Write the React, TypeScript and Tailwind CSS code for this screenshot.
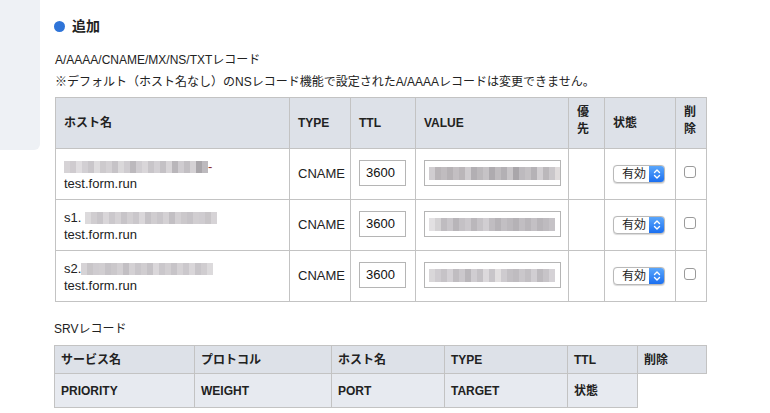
import React from "react";

const FONT = '"Liberation Sans", "Noto Sans CJK JP", sans-serif';

const Mosaic = ({ shades, w = 6, h = 12, className = "" }: { shades: string[]; w?: number; h?: number; className?: string }) => (
  <span className={"inline-flex align-middle blur-[0.6px] " + className}>
    {shades.map((c, i) => (
      <span key={i} style={{ width: w, height: h, background: c, display: "inline-block" }} />
    ))}
  </span>
);

const s1 = ["#d6d3d6", "#cfcbcf", "#e0dde0", "#d2cfd3", "#c9c6ca", "#dedcde", "#cdcacd", "#d4d1d4", "#c6c3c7", "#dad8da", "#cfccd0", "#bcb9bd", "#d0cdd1", "#d9d6d9", "#c8c5c9", "#d3d0d4", "#c4c1c5", "#d8d5d8", "#b9b6ba", "#cfccd0", "#c2bfc3", "#d4d1d4", "#a9a6aa", "#bdbabe"];
const s2 = ["#dcdadc", "#d0cdd0", "#c8c5c9", "#d9d6d9", "#cbc8cc", "#d5d2d5", "#c7c4c8", "#d2cfd2", "#cac7cb", "#dad7da", "#c5c2c6", "#d0cdd0", "#c9c6ca", "#d4d1d4", "#c2bfc3", "#d3d0d3", "#cbc8cb", "#c6c3c7", "#d1ced1", "#cfccd0", "#c8c5c8", "#d6d3d6"];
const v1 = ["#d0cdd0", "#b9b5b8", "#c0bcbf", "#b6b2b5", "#c3bfc2", "#bab6b9", "#cfcccf", "#b2afb3", "#bcb9bc", "#c6c3c6", "#aeabaf", "#bfbcbf", "#b3b0b4", "#c8c5c8", "#a9a6aa", "#bdbabe", "#c4c1c4", "#b5b2b6", "#d2cfd2", "#bbb8bb", "#cac7ca", "#e0dcdc"];
const v2 = ["#e2e0e2", "#d4d2d4", "#bfbcc0", "#c9c6ca", "#b8b5b9", "#c4c1c5", "#cbc8cc", "#bab7bb", "#c6c3c7", "#d1ced2", "#c0bdc1", "#b6b3b7", "#c2bfc3", "#bcb9bd", "#b5b2b6", "#c1bec2", "#b9b6ba", "#c3c0c4", "#b8b5b9", "#bebbbf", "#c5c2c6"];
const v3 = ["#d9d7d9", "#cfccd0", "#c6c3c7", "#d4d1d5", "#c0bdc1", "#cbc8cc", "#b9b6ba", "#d0cdd1", "#c4c1c5", "#dcd9dc", "#c8c5c9", "#e2dfe0", "#cecbcf", "#c3c0c4", "#bfbcc0", "#cac7cb", "#c2bfc3", "#d1ced2", "#bdbabe", "#c7c4c8", "#d5d2d6"];

const SelectBox = () => (
  <div className="flex h-[18px] w-[52px] rounded-[4px] border border-[#b9b9b9] bg-white overflow-hidden shadow-[0_0.5px_1px_rgba(0,0,0,0.15)]">
    <div className="flex-1 flex items-center pl-[8px] text-[12px] text-[#222] leading-none">有効</div>
    <div className="w-[15px] bg-gradient-to-b from-[#5aa6fb] to-[#1b6ff0] flex items-center justify-center">
      <svg width="8" height="12" viewBox="0 0 8 12" fill="none" stroke="white" strokeWidth="1.4" strokeLinecap="round" strokeLinejoin="round">
        <path d="M1.5 4.5 L4 2 L6.5 4.5" />
        <path d="M1.5 7.5 L4 10 L6.5 7.5" />
      </svg>
    </div>
  </div>
);

const CheckBox = () => <div className="w-[12px] h-[12px] rounded-[3px] border border-[#9a9a9a] bg-white" />;

const rows = [
  { pre: "", host: s1, tail: "-", val: v1 },
  { pre: "s1. ", host: s2, tail: "", val: v2 },
  { pre: "s2.", host: s2.slice().reverse(), tail: "", val: v3 },
];

const th = "border border-[#c3c3c3] bg-[#dde1e8] px-[8px] text-left align-middle font-bold text-[12px] text-[#222]";
const td = "border border-[#c3c3c3] px-[8px] align-middle text-[13px] text-[#222]";
const sth = "border border-[#c3c3c3] bg-[#dde1e8] px-[6px] h-[28px] text-left align-middle font-bold text-[12px] text-[#222]";
const std = "border border-[#c3c3c3] bg-[#e7eaf0] px-[6px] h-[34px] text-left align-middle font-bold text-[12px] text-[#222]";

export default function App() {
  return (
    <div className="flex w-[770px] h-[413px] overflow-hidden bg-white text-[#222]" style={{ fontFamily: FONT }}>
      <div className="w-[40px] shrink-0">
        <div className="h-[150px] bg-[#eef1f5] rounded-br-[6px]" />
      </div>
      <div className="ml-[15px] pt-[17px] flex-1">
        <div className="flex items-center h-[18px] -ml-[1px]">
          <span className="w-[11px] h-[11px] rounded-full bg-[#2f74d8]" />
          <span className="ml-[7px] text-[14px] font-bold text-[#222]">追加</span>
        </div>
        <div className="mt-[15px] h-[20px] flex items-center text-[12px] text-[#222]">A/AAAA/CNAME/MX/NS/TXTレコード</div>
        <div className="mt-[2px] h-[20px] flex items-center text-[12px] text-[#222]">
          ※デフォルト（ホスト名なし）のNSレコード機能で設定されたA/AAAAレコードは変更できません。
        </div>
        <table className="mt-[5px] border-collapse table-fixed w-[651px]">
          <colgroup>
            <col style={{ width: 234 }} />
            <col style={{ width: 61 }} />
            <col style={{ width: 65 }} />
            <col style={{ width: 153 }} />
            <col style={{ width: 36 }} />
            <col style={{ width: 71 }} />
            <col style={{ width: 31 }} />
          </colgroup>
          <thead>
            <tr>
              <th className={th + " h-[51px]"}>ホスト名</th>
              <th className={th}>TYPE</th>
              <th className={th}>TTL</th>
              <th className={th}>VALUE</th>
              <th className={th + " leading-[17px] pb-[4px]"}>優<br />先</th>
              <th className={th}>状態</th>
              <th className={th + " leading-[17px] pb-[4px]"}>削<br />除</th>
            </tr>
          </thead>
          <tbody>
            {rows.map((r, i) => (
              <tr key={i}>
                <td className={td + " h-[51px] leading-[17px]"}>
                  <div className="flex items-center h-[17px] mt-[2px]">
                    {r.pre && <span className="whitespace-pre">{r.pre}</span>}
                    <Mosaic shades={r.host} />
                    {r.tail && <span className="text-[#8a3030]">{r.tail}</span>}
                  </div>
                  <div>test.form.run</div>
                </td>
                <td className={td}>CNAME</td>
                <td className={td}>
                  <div className="w-[47px] h-[26px] border border-[#b5b5b5] flex items-center pl-[6px] text-[13px] text-[#111] mt-[-2px]">3600</div>
                </td>
                <td className={td}>
                  <div className="w-[137px] h-[26px] border border-[#b5b5b5] flex items-center pl-[4px] overflow-hidden mt-[-2px]">
                    <Mosaic shades={r.val} h={13} />
                  </div>
                </td>
                <td className={td}></td>
                <td className={td}>
                  <SelectBox />
                </td>
                <td className={td}>
                  <div className="mt-[-4px]"><CheckBox /></div>
                </td>
              </tr>
            ))}
          </tbody>
        </table>
        <div className="mt-[17px] h-[20px] flex items-center text-[12px] text-[#222] -ml-[1px]">SRVレコード</div>
        <table className="mt-[6px] -ml-[1px] border-collapse table-fixed w-[652px]">
          <colgroup>
            <col style={{ width: 140 }} />
            <col style={{ width: 137 }} />
            <col style={{ width: 113 }} />
            <col style={{ width: 123 }} />
            <col style={{ width: 70 }} />
            <col style={{ width: 69 }} />
          </colgroup>
          <tbody>
            <tr>
              <td className={sth}>サービス名</td>
              <td className={sth}>プロトコル</td>
              <td className={sth}>ホスト名</td>
              <td className={sth}>TYPE</td>
              <td className={sth}>TTL</td>
              <td className={sth}>削除</td>
            </tr>
            <tr>
              <td className={std}>PRIORITY</td>
              <td className={std}>WEIGHT</td>
              <td className={std}>PORT</td>
              <td className={std}>TARGET</td>
              <td className={std}>状態</td>
            </tr>
          </tbody>
        </table>
      </div>
    </div>
  );
}
